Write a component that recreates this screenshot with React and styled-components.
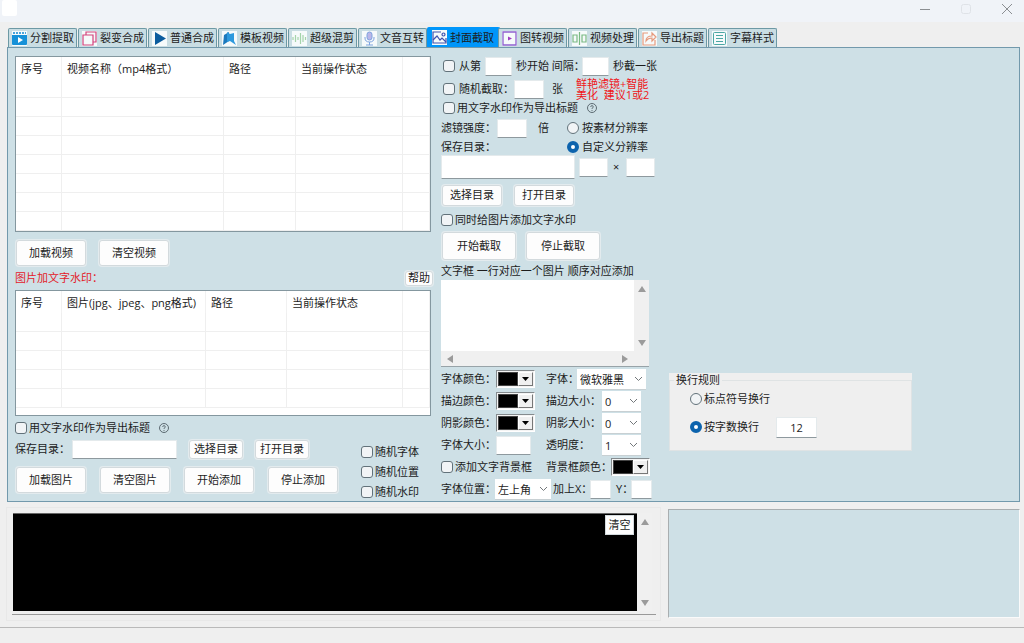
import React, { useState } from "react";
import styled, { createGlobalStyle } from "styled-components";

/* style */

const GlobalStyle = createGlobalStyle`
  * {
    box-sizing: border-box;
  }
  body {
    margin: 0;
    background: #efefef;
  }
  body, button, input, select, textarea {
    font-family: "Open Sans", "Noto Sans CJK SC", sans-serif;
    font-size: 11px;
    line-height: 16px;
    color: #1c1c1c;
  }
`;

const Window = styled.div`
  min-height: 100vh;
  display: flex;
  flex-direction: column;
`;

const TitleBar = styled.header`
  display: flex;
  justify-content: space-between;
  height: 22px;
  padding: 0 8px 0 2px;
  background: #f0f3f8;
`;

const AppIcon = styled.span`
  width: 15px;
  height: 16px;
  border-radius: 2px;
  background: #fff;
`;

const WindowButtons = styled.div`
  display: flex;
  align-items: center;
  gap: 23px;
  height: 18px;
`;

const WindowButton = styled.button`
  display: flex;
  width: 18px;
  height: 18px;
  padding: 4px;
  border: 0;
  background: none;
  color: ${(props) => props.$color || "#8b8e92"};
`;

const Tabs = styled.nav`
  display: flex;
  align-items: flex-end;
  gap: 1px;
  height: 25px;
  padding-left: 8px;
`;

const Tab = styled.button`
  display: flex;
  align-items: center;
  gap: 3px;
  width: ${(props) => (props.$active ? "73px" : "69px")};
  height: ${(props) => (props.$active ? "20px" : "19px")};
  margin: ${(props) => (props.$active ? "0 -3px 0 -1px" : "0")};
  padding: 0 0 0 ${(props) => (props.$active ? "4px" : "3px")};
  border: 1px solid ${(props) => (props.$active ? "#0096fa" : "#6d99a4")};
  border-bottom: 0;
  border-radius: 2px 2px 0 0;
  background: ${(props) => (props.$active ? "#0096fa" : "#c9dde3")};
  white-space: nowrap;

  & svg {
    flex: none;
    background: #f6fafb;
  }
`;

const Panel = styled.main`
  display: grid;
  grid-template-columns: minmax(0, 416fr) minmax(0, 218fr) minmax(0, 343fr);
  column-gap: 10px;
  margin: 0 4px 0 7px;
  padding: 8px 7px 1px;
  border: 1px solid #7299ac;
  background: #cee0e6;
`;

const Column = styled.div`
  display: flex;
  flex-direction: column;
`;

const Line = styled.div`
  display: flex;
  align-items: center;
  gap: ${(props) => props.$gap || 0}px;
  height: ${(props) => props.$height || 20}px;
  margin-top: ${(props) => props.$top || 0}px;
  padding-left: ${(props) => props.$left || 0}px;
  white-space: nowrap;
`;

const Spread = styled(Line)`
  justify-content: space-between;
  margin-right: -2px;
`;

const TableBox = styled.div`
  height: ${(props) => props.$height}px;
  border: 1px solid #84979f;
  background: #fff;
  overflow: hidden;
`;

const Table = styled.table`
  width: 100%;
  table-layout: fixed;
  border-spacing: 0;

  & th {
    height: 22px;
    padding: 2px 0 0 5px;
    border-right: 1px solid #f1f1f1;
    font-weight: 400;
    text-align: left;
    white-space: nowrap;
  }
  & td {
    height: 19px;
    padding: 0;
    border-right: 1px solid #efefef;
    border-bottom: 1px solid #efefef;
  }
`;

const Button = styled.button`
  width: ${(props) => props.$width || 70}px;
  height: ${(props) => props.$height || 26}px;
  flex: none;
  padding: 0;
  border: 1px solid #d3dadd;
  border-radius: 3px;
  background: #fdfdfd;
  box-shadow: 0 0 0 1px #e3ebee;
  white-space: nowrap;
`;

const SmallButton = styled(Button)`
  line-height: 12px;
`;

const Check = styled.label`
  display: flex;
  align-items: center;
  gap: ${(props) => props.$gap || 2}px;
  white-space: nowrap;

  & input {
    appearance: none;
    flex: none;
    width: 12px;
    height: 12px;
    margin: 0;
    border: 1px solid #62727a;
    border-radius: 3px;
    background: #f1f4f6;
  }
  & input[type="radio"] {
    border-radius: 50%;
  }
  & input[type="checkbox"]:checked {
    background: #0c63ad;
  }
  & input[type="radio"]:checked {
    border: 4px solid #0c63ad;
    background: #fff;
  }
`;

const Label = styled.label`
  width: ${(props) => (props.$width ? props.$width + "px" : "auto")};
  flex: none;
  white-space: nowrap;
`;

const Input = styled.input`
  width: ${(props) => props.$width}px;
  height: ${(props) => props.$height || 19}px;
  flex: none;
  padding: 0 2px;
  border: 1px solid #e4eaec;
  border-bottom-color: #8e999e;
  background: #fff;
  text-align: center;
`;

const RedTitle = styled.h2`
  margin: 0;
  color: #e3202a;
  font-size: 11px;
  font-weight: 400;
`;

const RedNote = styled.p`
  margin: 0;
  color: #f01418;
  font-size: 11px;
  line-height: 11px;
  white-space: pre;
`;

const Bottom = styled.div`
  display: flex;
  justify-content: space-between;
  padding: 4px 12px 0 0;
`;

const CheckList = styled.div`
  display: flex;
  flex-direction: column;
  gap: 4px;
  padding-top: 24px;
`;

const TextBox = styled.div`
  display: grid;
  grid-template-columns: 1fr 15px;
  grid-template-rows: 1fr 15px;
  width: 208px;
  height: 87px;
  margin: 1px 0;
  border-bottom: 1px solid #98a3a8;
  background: #f0f0f0;

  & textarea {
    min-width: 0;
    border: 0;
    padding: 2px;
    resize: none;
    background: #fff;
  }
`;

const Bar = styled.div`
  display: flex;
  flex-direction: ${(props) => (props.$row ? "row" : "column")};
  align-items: center;
  justify-content: space-between;
  padding: ${(props) => (props.$row ? "0 5px" : "5px 0 4px")};
  background: #f0f0f0;
`;

const ColorPick = styled.button`
  display: flex;
  width: 39px;
  height: 18px;
  flex: none;
  padding: 1px;
  border: 1px solid #858b8e;
  border-right-color: #fff;
  border-bottom-color: #fff;
  background: #f4f4f4;
`;

const Swatch = styled.span`
  width: 20px;
  height: 14px;
  border: 1px solid #444;
  background: #000;
`;

const Drop = styled.span`
  display: flex;
  align-items: center;
  justify-content: center;
  flex: 1;
  height: 14px;
  border: 1px solid #fff;
  border-right-color: #777;
  border-bottom-color: #777;
  background: #f0f0f0;
`;

const SelectBox = styled.span`
  display: grid;
  align-items: center;
  width: ${(props) => props.$width}px;
  height: 21px;
  flex: none;
  background: #fff;
  border-bottom: 1px solid #c8d0d3;

  & select, & svg {
    grid-area: 1 / 1;
  }
  & select {
    appearance: none;
    width: 100%;
    height: 20px;
    padding: 2px 0 0 3px;
    border: 0;
    background: none;
  }
  & svg {
    justify-self: end;
    margin-right: 3px;
    pointer-events: none;
  }
`;

const Fields = styled.div`
  display: grid;
  grid-template-columns: 105px 1fr;
`;

const RuleBox = styled.div`
  align-self: start;
  width: 243px;
  margin-top: 317px;
  background: #efefef;
`;

const Rules = styled.fieldset`
  height: 78px;
  margin: 0;
  padding: 0 0 0 20px;
  border: 1px solid #dfe3e4;

  & legend {
    margin-left: -16px;
    padding: 0 2px;
    line-height: 14px;
  }
`;

const Lower = styled.section`
  display: grid;
  grid-template-columns: minmax(0, 655fr) minmax(0, 352fr);
  column-gap: 7px;
  padding: 5px 4px 6px 6px;
`;

const LogFrame = styled.div`
  height: 114px;
  padding: 5px 4px 5px 5px;
  border: 1px solid #e8e8e8;
`;

const LogBox = styled.div`
  position: relative;
  display: grid;
  grid-template-columns: 1fr 15px 4px;
  height: 102px;
  padding: 0 0 3px 1px;
  border-bottom: 1px solid #999;

  & textarea {
    width: 100%;
    height: 98px;
    padding: 4px;
    border: 0;
    border-top: 1px solid #666;
    resize: none;
    background: #000;
    color: #fff;
  }
`;

const ClearButton = styled(Button)`
  position: absolute;
  top: 2px;
  right: 22px;
  border-radius: 0;
  box-shadow: none;
`;

const Preview = styled.div`
  height: 109px;
  margin-top: 2px;
  border: 1px solid #fafafa;
  border-top-color: #a9aeb0;
  border-left-color: #a9aeb0;
  background: #cee0e6;
`;

const StatusBar = styled.footer`
  flex: 1;
  border-top: 1px solid #b9b9b9;
  background: #efefef;
`;

/* icons */

const tabIcons = {
  split: (
    <>
      <path d="M1 1h2v2H1zM4 1h2v2H4zM7 1h2v2H7zM10 1h2v2h-2zM13 1h1v2h-1z" fill="#4aa5dc" />
      <path d="M0 4h15v9q0 1-1 1H1q-1 0-1-1z" fill="#1691d8" />
      <path d="M6 6l5 3-5 3z" fill="#fff" />
    </>
  ),
  copy: (
    <g fill="none" stroke="#d3447d" strokeWidth="1.2">
      <path d="M4 4V1h10v10h-3" />
      <path d="M1 4h10v10H1z" />
    </g>
  ),
  play: <path d="M3 1l11 6.500-11 6.500z" fill="#0b5c9e" />,
  template: (
    <>
      <path d="M2 4l5-3v9l-6 4z" fill="#1c79bd" />
      <path d="M5 1l3 2 4-1v8l2 4-6-4-3 1z" fill="#2d99dd" />
    </>
  ),
  wave: (
    <path d="M1 6v3M3.500 4v7M6 6v3M8.500 2v11M11 4v7M13.500 6v3" stroke="#a5d4ab" strokeWidth="1.2" />
  ),
  mic: (
    <g fill="none" stroke="#7da3df">
      <rect x="5" y="1" width="5" height="8" rx="2.500" fill="#b9b6e8" />
      <path d="M3 6v1q0 4 4.500 4T12 7V6M7.500 11v3M4 14h7" />
    </g>
  ),
  image: (
    <g fill="none" stroke="#3f51ae" strokeWidth="1.2">
      <path d="M14 8v5H1V2h8" />
      <path d="M1 10l4-4 3 4 2-2 4 4" />
      <circle cx="11.500" cy="4.500" r="1.500" />
    </g>
  ),
  frame: (
    <>
      <path d="M1 1h13v13H1z" fill="none" stroke="#9061cf" strokeWidth="1.3" />
      <path d="M6 5.500l4 2-4 2z" fill="#a03cc0" />
    </>
  ),
  process: (
    <g fill="none" stroke="#79b983" strokeWidth="1.2">
      <path d="M5 4H1v7h4zM10 4h4v7h-4zM7.500 1v13" />
    </g>
  ),
  share: (
    <g fill="none" stroke="#e79a7d" strokeWidth="1.2">
      <path d="M6 2H1v12h12V9" />
      <path d="M4 10q0-5 6-5V2l4 4-4 4V7q-4 0-6 3z" />
    </g>
  ),
  subtitle: (
    <g fill="none" stroke="#4ba7a4">
      <rect x="1.500" y="1.500" width="12" height="12" rx="1" />
      <path d="M4 4.500h7M4 7.500h7M4 10.500h7" />
    </g>
  ),
};

const tabs = [
  ["split", "分割提取"],
  ["copy", "裂变合成"],
  ["play", "普通合成"],
  ["template", "模板视频"],
  ["wave", "超级混剪"],
  ["mic", "文音互转"],
  ["image", "封面截取"],
  ["frame", "图转视频"],
  ["process", "视频处理"],
  ["share", "导出标题"],
  ["subtitle", "字幕样式"],
];

const arrows = {
  up: "M4 1l4 6H0z",
  down: "M0 1h8L4 7z",
  left: "M1 4l6-4v8z",
  right: "M7 4L1 0v8z",
};

const Arrow = ({ dir }) => (
  <svg width="8" height="8" viewBox="0 0 8 8">
    <path d={arrows[dir]} fill="#9b9b9b" />
  </svg>
);

const HelpIcon = () => (
  <svg width="10" height="10" viewBox="0 0 10 10" fill="none" stroke="#5d6b72">
    <circle cx="5" cy="5" r="4.500" />
    <path d="M3.700 4q0-1.400 1.300-1.400T6.300 4Q6.300 4.800 5 5.300V6M5 7v1" strokeWidth="0.9" />
  </svg>
);

/* parts */

function Grid({ columns, rows, height }) {
  return (
    <TableBox $height={height}>
      <Table>
        <colgroup>
          {columns.map(([name, width]) => (
            <col key={name} width={width} />
          ))}
          <col />
        </colgroup>
        <thead>
          <tr>
            {columns.map(([name]) => (
              <th key={name} scope="col">{name}</th>
            ))}
            <th />
          </tr>
        </thead>
        <tbody>
          {Array.from({ length: rows }, (_, i) => (
            <tr key={i}>
              {columns.map(([name]) => (
                <td key={name} />
              ))}
              <td />
            </tr>
          ))}
        </tbody>
      </Table>
    </TableBox>
  );
}

function CheckBox({ children, gap }) {
  return (
    <Check $gap={gap}>
      <input type="checkbox" />
      {children}
    </Check>
  );
}

function ColorField({ label, width = 55 }) {
  return (
    <Line $height={22}>
      <Label as="span" $width={width}>{label}</Label>
      <ColorPick type="button" aria-label={label}>
        <Swatch />
        <Drop>
          <svg width="7" height="4" viewBox="0 0 7 4">
            <path d="M0 0h7L3.500 4z" />
          </svg>
        </Drop>
      </ColorPick>
    </Line>
  );
}

function Select({ id, width, options }) {
  return (
    <SelectBox $width={width}>
      <select id={id}>
        {options.map((option) => (
          <option key={option}>{option}</option>
        ))}
      </select>
      <svg width="9" height="6" viewBox="0 0 9 6" fill="none" stroke="#73787b">
        <path d="M1 1l3.500 3.500L8 1" />
      </svg>
    </SelectBox>
  );
}

function SelectField({ id, label, labelWidth = 56, width = 39, options }) {
  return (
    <Line $height={22}>
      <Label htmlFor={id} $width={labelWidth}>{label}</Label>
      <Select id={id} width={width} options={options} />
    </Line>
  );
}

function LeftColumn() {
  return (
    <Column>
      <Grid
        height={176}
        rows={8}
        columns={[["序号", 46], ["视频名称（mp4格式）", 162], ["路径", 72], ["当前操作状态", 107]]}
      />
      <Line $top={7} $gap={13} $left={1} $height={27}>
        <Button>加载视频</Button>
        <Button>清空视频</Button>
      </Line>
      <Spread $top={3} $height={18}>
        <RedTitle>图片加文字水印：</RedTitle>
        <SmallButton $width={28} $height={15}>帮助</SmallButton>
      </Spread>
      <Line $height={3} />
      <Grid
        height={126}
        rows={5}
        columns={[["序号", 46], ["图片(jpg、jpeg、png格式)", 144], ["路径", 81], ["当前操作状态", 116]]}
      />
      <Bottom>
        <div>
          <Line $height={16} $gap={9}>
            <CheckBox>用文字水印作为导出标题</CheckBox>
            <HelpIcon />
          </Line>
          <Line $top={3} $gap={12}>
            <Label htmlFor="image-dir" $width={45}>保存目录：</Label>
            <Input id="image-dir" $width={105} />
            <Button $width={54} $height={19}>选择目录</Button>
            <Button $width={54} $height={19}>打开目录</Button>
          </Line>
          <Line $top={7} $gap={14} $left={1} $height={28}>
            <Button>加载图片</Button>
            <Button>清空图片</Button>
            <Button>开始添加</Button>
            <Button>停止添加</Button>
          </Line>
        </div>
        <CheckList>
          <Line $height={16}><CheckBox>随机字体</CheckBox></Line>
          <Line $height={16}><CheckBox>随机位置</CheckBox></Line>
          <Line $height={16}><CheckBox>随机水印</CheckBox></Line>
        </CheckList>
      </Bottom>
    </Column>
  );
}

function MiddleColumn() {
  const [size, setSize] = useState("custom");
  return (
    <Column>
      <Line $gap={4} $left={2}>
        <CheckBox gap={4}>从第</CheckBox>
        <Input $width={27} aria-label="开始秒数" />
        <Label htmlFor="interval" $width={62}>秒开始 间隔：</Label>
        <Input id="interval" $width={27} />
        <span>秒截一张</span>
      </Line>
      <Line $top={1} $height={24} $left={2}>
        <CheckBox gap={4}>随机截取：</CheckBox>
        <Input $width={30} aria-label="随机截取张数" />
        <Line $left={8} $gap={13}>
          <span>张</span>
          <RedNote>{"鲜艳滤镜+智能\n美化  建议1或2"}</RedNote>
        </Line>
      </Line>
      <Line $height={14} $gap={9} $left={2}>
        <CheckBox>用文字水印作为导出标题</CheckBox>
        <HelpIcon />
      </Line>
      <Line $top={3}>
        <Label htmlFor="filter" $width={56}>滤镜强度：</Label>
        <Input id="filter" $width={30} />
        <Line $left={11} $gap={18}>
          <span>倍</span>
          <Check $gap={3}>
            <input type="radio" name="size" checked={size === "source"} onChange={() => setSize("source")} />
            按素材分辨率
          </Check>
        </Line>
      </Line>
      <Line $top={1} $height={16}>
        <Label htmlFor="video-dir" $width={126}>保存目录：</Label>
        <Check $gap={3}>
          <input type="radio" name="size" checked={size === "custom"} onChange={() => setSize("custom")} />
          自定义分辨率
        </Check>
      </Line>
      <Line $height={24} $gap={4}>
        <Input id="video-dir" $width={134} $height={24} />
        <Input $width={29} aria-label="宽度" />
        <Line $gap={7} $left={1}>
          <span>×</span>
          <Input $width={29} aria-label="高度" />
        </Line>
      </Line>
      <Line $top={4} $gap={12} $left={1} $height={24}>
        <Button $width={60} $height={21}>选择目录</Button>
        <Button $width={60} $height={21}>打开目录</Button>
      </Line>
      <Line $top={5} $height={16}>
        <CheckBox>同时给图片添加文字水印</CheckBox>
      </Line>
      <Line $top={2} $gap={10} $left={1} $height={32}>
        <Button $width={74} $height={28}>开始截取</Button>
        <Button $width={74} $height={28}>停止截取</Button>
      </Line>
      <Line $top={1} $height={16}>
        <Label htmlFor="captions">文字框 一行对应一个图片 顺序对应添加</Label>
      </Line>
      <TextBox>
        <textarea id="captions" />
        <Bar><Arrow dir="up" /><Arrow dir="down" /></Bar>
        <Bar $row><Arrow dir="left" /><Arrow dir="right" /></Bar>
      </TextBox>
      <Fields>
        <ColorField label="字体颜色：" />
        <SelectField id="font" label="字体：" labelWidth={31} width={69} options={["微软雅黑", "宋体", "黑体"]} />
        <ColorField label="描边颜色：" />
        <SelectField id="stroke" label="描边大小：" options={["0", "1", "2"]} />
        <ColorField label="阴影颜色：" />
        <SelectField id="shadow" label="阴影大小：" options={["0", "1", "2"]} />
        <Line $height={22}>
          <Label htmlFor="font-size" $width={55}>字体大小：</Label>
          <Input id="font-size" $width={35} />
        </Line>
        <SelectField id="opacity" label="透明度：" options={["1", "0.5", "0"]} />
        <Line $height={22}>
          <CheckBox>添加文字背景框</CheckBox>
        </Line>
        <ColorField label="背景框颜色：" width={65} />
      </Fields>
      <Line $height={22}>
        <Label htmlFor="position" $width={54}>字体位置：</Label>
        <Select id="position" width={56} options={["左上角", "右上角", "居中"]} />
        <Line $left={2}>
          <Label htmlFor="offset-x" $width={37}>加上X：</Label>
          <Input id="offset-x" $width={21} />
        </Line>
        <Line $left={5}>
          <Label htmlFor="offset-y" $width={15}>Y：</Label>
          <Input id="offset-y" $width={21} />
        </Line>
      </Line>
    </Column>
  );
}

function WrapRules() {
  const [rule, setRule] = useState("count");
  return (
    <RuleBox>
      <Rules>
        <legend>换行规则</legend>
        <Line $height={24}>
          <Check>
            <input type="radio" name="rule" checked={rule === "mark"} onChange={() => setRule("mark")} />
            标点符号换行
          </Check>
        </Line>
        <Line $top={4} $height={24} $gap={17}>
          <Check>
            <input type="radio" name="rule" checked={rule === "count"} onChange={() => setRule("count")} />
            按字数换行
          </Check>
          <Input $width={41} $height={21} defaultValue="12" aria-label="每行字数" />
        </Line>
      </Rules>
    </RuleBox>
  );
}

function App() {
  const [active, setActive] = useState("image");
  return (
    <Window>
      <GlobalStyle />
      <TitleBar>
        <AppIcon />
        <WindowButtons>
          <WindowButton aria-label="最小化">
            <svg width="10" height="10"><path d="M0 5.500h10" stroke="currentColor" /></svg>
          </WindowButton>
          <WindowButton aria-label="最大化" $color="#dfe2e7">
            <svg width="10" height="10"><rect x="0.500" y="0.500" width="9" height="9" rx="2" fill="none" stroke="currentColor" /></svg>
          </WindowButton>
          <WindowButton aria-label="关闭">
            <svg width="10" height="10"><path d="M0 0l10 10M10 0L0 10" stroke="currentColor" /></svg>
          </WindowButton>
        </WindowButtons>
      </TitleBar>
      <Tabs>
        {tabs.map(([icon, name]) => (
          <Tab key={icon} $active={icon === active} onClick={() => setActive(icon)}>
            <svg width="15" height="15" viewBox="0 0 15 15">{tabIcons[icon]}</svg>
            {name}
          </Tab>
        ))}
      </Tabs>
      <Panel>
        <LeftColumn />
        <MiddleColumn />
        <WrapRules />
      </Panel>
      <Lower>
        <LogFrame>
          <LogBox>
            <textarea readOnly aria-label="日志" />
            <Bar><Arrow dir="up" /><Arrow dir="down" /></Bar>
            <ClearButton $width={29} $height={20}>清空</ClearButton>
          </LogBox>
        </LogFrame>
        <Preview />
      </Lower>
      <StatusBar />
    </Window>
  );
}

export default App;
